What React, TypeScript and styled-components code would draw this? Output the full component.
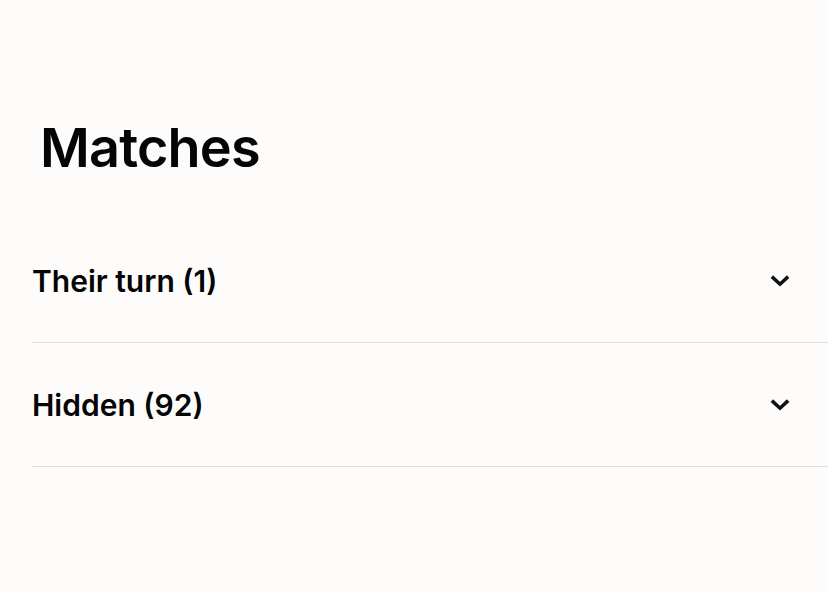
import styled, { createGlobalStyle } from "styled-components";

const GlobalStyle = createGlobalStyle`
  html, body {
    margin: 0;
    padding: 0;
    background: #fdfcfb;
    font-family: Inter, "Liberation Sans", sans-serif;
    color: #050505;
  }
`;

const Page = styled.div`
  width: 828px;
  min-height: 592px;
  padding: 112px 0 0 32px;
  box-sizing: border-box;
`;

const Title = styled.h1`
  margin: 0 0 0 8px;
  font-size: 54px;
  font-weight: 600;
  letter-spacing: -0.8px;
  line-height: 72px;
`;

const List = styled.div`
  margin-top: 35px;
`;

const Row = styled.div`
  height: 124px;
  display: flex;
  align-items: center;
  justify-content: space-between;
  padding-right: 37px;
  border-bottom: 1px solid #e0dfdd;
  box-sizing: border-box;
`;

const Label = styled.span`
  font-size: 30px;
  font-weight: 600;
`;

const Chevron = () => (
  <svg width="22" height="22" viewBox="0 0 24 24" fill="none" stroke="#111" strokeWidth="3.8" strokeLinecap="square">
    <path d="M4.5 8.5 12 15.5 19.5 8.5" />
  </svg>
);

const sections = [
  { label: "Their turn", count: 1 },
  { label: "Hidden", count: 92 },
];

export default function App() {
  return (
    <>
      <GlobalStyle />
      <Page>
        <Title>Matches</Title>
        <List>
          {sections.map((s) => (
            <Row key={s.label}>
              <Label>
                {s.label} ({s.count})
              </Label>
              <Chevron />
            </Row>
          ))}
        </List>
      </Page>
    </>
  );
}
